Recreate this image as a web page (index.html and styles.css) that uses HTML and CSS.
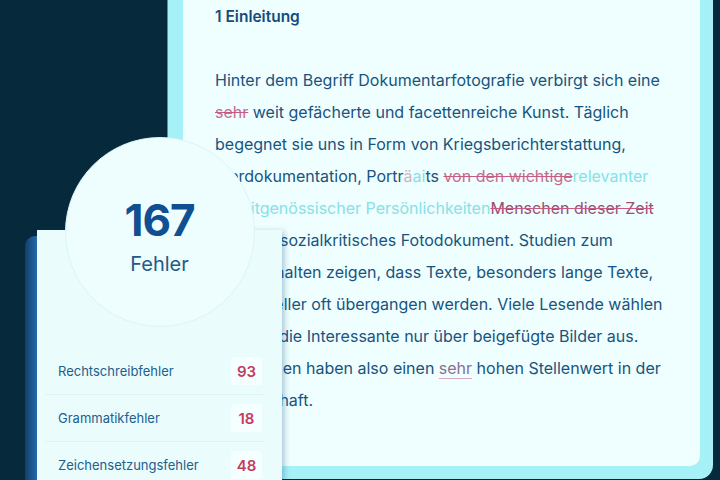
FILE: index.html
```html
<!DOCTYPE html>
<html lang="de">
<head>
    <meta charset="UTF-8">
    <meta name="viewport" content="width=device-width, initial-scale=1.0">
    <title>Fehlerprüfung – Einleitung</title>
    <link rel="stylesheet" href="styles.css">
</head>
<body>
    <div class="stage">
        <div class="doc">
            <div class="page">
                <h3 class="chapter">1 Einleitung</h3>
                <p class="text">
                    Hinter dem Begriff Dokumentarfotografie verbirgt sich eine<br>
                    <span class="del">sehr</span> weit gefächerte und facettenreiche Kunst. Täglich<br>
                    begegnet sie uns in Form von Kriegsberichterstattung,<br>
                    Tierdokumentation, Portr<span class="mark">ä</span><span class="ins">ai</span>ts <span class="del">von den wichtige</span><span class="ins">relevanter</span><br>
                    <span class="ins">in zeitgenössischer Persönlichkeiten</span><span class="del dark">Menschen dieser Zeit</span><br>
                    oder als sozialkritisches Fotodokument. Studien zum<br>
                    Leseverhalten zeigen, dass Texte, besonders lange Texte,<br>
                    zu schneller oft übergangen werden. Viele Lesende wählen<br>
                    deshalb die Interessante nur über beigefügte Bilder aus.<br>
                    Fotografien haben also einen <span class="hint">sehr</span> hohen Stellenwert in der<br>
                    Gesellschaft.
                </p>
            </div>
        </div>

        <!-- summary card lying over the document -->
        <div class="stats">
            <div class="total">
                <div class="total-num">167</div>
                <div class="total-label">Fehler</div>
            </div>
            <ul class="rows">
                <li class="row">
                    <span class="row-label">Rechtschreibfehler</span>
                    <span class="badge">93</span>
                </li>
                <li class="row">
                    <span class="row-label">Grammatikfehler</span>
                    <span class="badge">18</span>
                </li>
                <li class="row">
                    <span class="row-label">Zeichensetzungsfehler</span>
                    <span class="badge">48</span>
                </li>
            </ul>
        </div>
    </div>
</body>
</html>
```

FILE: styles.css
```css
body {
    margin: 0;
    padding: 0;
    font-family: Inter, "Noto Sans", sans-serif;
    background: #062a3c;
}

.stage {
    position: relative;
    width: 720px;
    height: 480px;
    overflow: hidden;
}

/* document sheet with its cyan frame */
.doc {
    box-sizing: border-box;
    margin: -30px 7px 0 168px;
    height: 509px;
    padding: 14px 13px 13px 15px;
    background: #a6f0f7;
    border-radius: 14px;
    box-shadow: -1px 0 0 #4f8fb0;
}

.page {
    box-sizing: border-box;
    height: 100%;
    padding: 23px 20px 0 32px;
    background: #effefe;
    border-radius: 10px;
}

.chapter {
    margin: 0;
    font-size: 15.5px;
    line-height: 20px;
    font-weight: 600;
    color: #154c7b;
}

.text {
    margin: 37px 0 0;
    font-size: 16px;
    line-height: 32px;
    color: #17547f;
    white-space: nowrap;
}

.del {
    color: #c86a8e;
    text-decoration: line-through;
    text-decoration-color: #c45c84;
}

.del.dark {
    color: #9c4e72;
}

.ins {
    color: #86e1e9;
}

.mark {
    color: #c9b7c9;
}

.hint {
    color: #8c6f94;
    text-decoration: underline;
    text-decoration-color: #d6a9c6;
    text-underline-offset: 4px;
}

/* error summary */
.stats {
    position: absolute;
    z-index: 1;
    left: 37px;
    top: 230px;
    width: 245px;
    height: 260px;
    background: #ebfcfd;
    box-shadow: 2px 2px 6px rgba(20, 80, 140, 0.35);
}

/* blue edge of the card behind */
.stats::before {
    content: '';
    position: absolute;
    left: -12px;
    top: 6px;
    bottom: 0;
    width: 12px;
    border-radius: 10px 0 0 0;
    background: linear-gradient(to right, #123f6a, #2469aa);
}

.total {
    box-sizing: border-box;
    width: 190px;
    height: 190px;
    margin: -93px auto 0;
    padding-top: 58px;
    border-radius: 50%;
    background: #eefdfe;
    border: 1px solid #dcf5f8;
    text-align: center;
}

.total-num {
    font-size: 44px;
    line-height: 48px;
    font-weight: 700;
    color: #0f4f92;
    letter-spacing: -1px;
}

.total-label {
    margin-top: 8px;
    font-size: 20px;
    line-height: 24px;
    color: #1f5b88;
}

.rows {
    list-style: none;
    margin: 21px 17px 0 8px;
    padding: 0;
}

.row {
    display: flex;
    align-items: center;
    justify-content: space-between;
    height: 46px;
    padding: 0 3px 0 13px;
    border-bottom: 1px solid #def4f6;
}

.row-label {
    font-size: 13px;
    color: #20608d;
}

.badge {
    width: 31px;
    height: 28px;
    display: flex;
    align-items: center;
    justify-content: center;
    border-radius: 4px;
    background: #f5ffff;
    font-size: 15px;
    font-weight: 600;
    color: #c33c60;
}
```
